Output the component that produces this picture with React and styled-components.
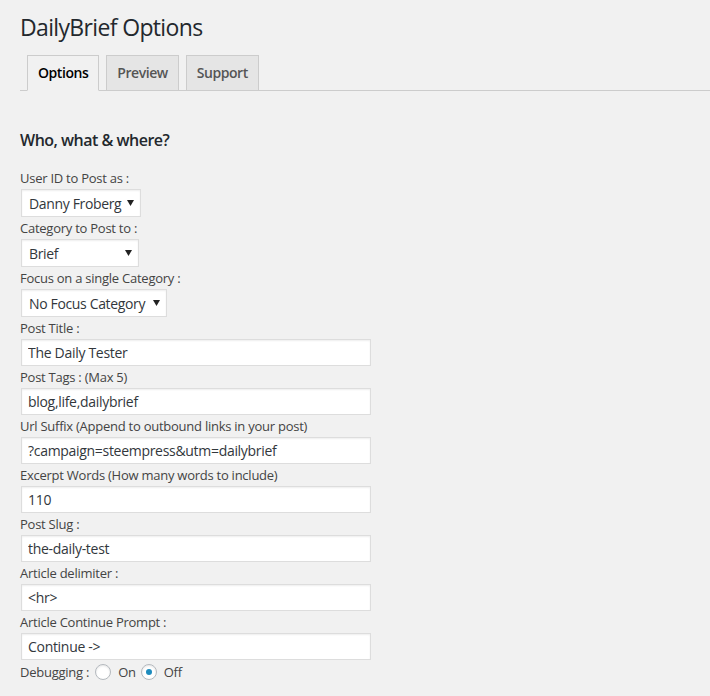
import styled, { createGlobalStyle } from 'styled-components'

const GlobalStyle = createGlobalStyle`
  html, body {
    margin: 0;
    background: #f1f1f1;
  }
  body {
    font-family: "Open Sans", "Noto Sans", sans-serif;
    font-size: 13px;
    letter-spacing: -0.25px;
    color: #444;
  }
`

const Wrap = styled.div`
  padding: 4px 0 0 20px;
`

const Title = styled.h1`
  margin: 0;
  padding: 9px 0 4px;
  font-size: 23px;
  font-weight: 400;
  line-height: 29px;
  letter-spacing: -0.65px;
  color: #23282d;
`

const TabBar = styled.div`
  display: flex;
  align-items: flex-end;
  padding-top: 9px;
  border-bottom: 1px solid #ccc;
`

const Tab = styled.a`
  display: block;
  margin: 0 0 -1px 7px;
  padding: 5px 10px;
  border: 1px solid #ccc;
  border-bottom-color: ${(p) => (p.$active ? '#f1f1f1' : '#ccc')};
  background: ${(p) => (p.$active ? '#f1f1f1' : '#e5e5e5')};
  color: ${(p) => (p.$active ? '#000' : '#555')};
  font-size: 14px;
  font-weight: 600;
  line-height: 24px;
  letter-spacing: -0.45px;
  text-decoration: none;
`

const SectionTitle = styled.h2`
  margin: 38px 0 17px;
  font-size: 16px;
  font-weight: 600;
  line-height: 22px;
  letter-spacing: -0.5px;
  color: #23282d;
`

const Form = styled.form`
  display: flex;
  flex-direction: column;
  align-items: flex-start;
`

const Label = styled.label`
  display: block;
  line-height: 20px;
  color: #444;
`

const SelectWrap = styled.div`
  position: relative;
  margin: 1px;
  width: ${(p) => p.$width}px;
`

const Select = styled.select`
  appearance: none;
  box-sizing: border-box;
  display: block;
  width: 100%;
  height: 28px;
  padding: 0 14px 0 7px;
  border: 1px solid #ddd;
  box-shadow: inset 0 1px 2px rgba(0, 0, 0, 0.07);
  background: #fff;
  color: #32373c;
  font-family: inherit;
  font-size: 14px;
  letter-spacing: -0.35px;
  border-radius: 0;
`

const Arrow = styled.svg`
  position: absolute;
  right: 7px;
  top: 11px;
  pointer-events: none;
`

const TextInput = styled.input`
  box-sizing: border-box;
  display: block;
  width: 350px;
  height: 27px;
  margin: 1px;
  padding: 0 6px;
  border: 1px solid #ddd;
  box-shadow: inset 0 1px 2px rgba(0, 0, 0, 0.07);
  background: #fff;
  color: #32373c;
  font-family: inherit;
  font-size: 14px;
  letter-spacing: -0.3px;
`

const RadioRow = styled.div`
  display: flex;
  align-items: center;
  height: 22px;
`

const RadioLabel = styled.label`
  display: flex;
  align-items: center;
  gap: 7px;
  margin-left: ${(p) => p.$gap}px;
`

const Radio = styled.span`
  box-sizing: border-box;
  display: flex;
  align-items: center;
  justify-content: center;
  width: 16px;
  height: 16px;
  border: 1px solid #b4b9be;
  border-radius: 50%;
  background: #fff;
  box-shadow: inset 0 1px 2px rgba(0, 0, 0, 0.1);
  &::after {
    content: '';
    display: ${(p) => (p.$checked ? 'block' : 'none')};
    width: 6px;
    height: 6px;
    border-radius: 50%;
    background: #1e8cbe;
  }
`

const DropSelect = ({ width, value }) => (
  <SelectWrap $width={width}>
    <Select defaultValue={value}>
      <option>{value}</option>
    </Select>
    <Arrow width="7" height="6" viewBox="0 0 7 6">
      <polygon points="0,0 7,0 3.5,6" fill="#222" />
    </Arrow>
  </SelectWrap>
)

const textFields = [
  ['Post Title :', 'The Daily Tester'],
  ['Post Tags : (Max 5)', 'blog,life,dailybrief'],
  ['Url Suffix (Append to outbound links in your post)', '?campaign=steempress&utm=dailybrief'],
  ['Excerpt Words (How many words to include)', '110'],
  ['Post Slug :', 'the-daily-test'],
  ['Article delimiter :', '<hr>'],
  ['Article Continue Prompt :', 'Continue ->'],
]

export default function App() {
  return (
    <>
      <GlobalStyle />
      <Wrap>
        <Title>DailyBrief Options</Title>
        <TabBar>
          <Tab $active>Options</Tab>
          <Tab>Preview</Tab>
          <Tab>Support</Tab>
        </TabBar>
        <SectionTitle>Who, what &amp; where?</SectionTitle>
        <Form>
          <Label>User ID to Post as :</Label>
          <DropSelect width={120} value="Danny Froberg" />
          <Label>Category to Post to :</Label>
          <DropSelect width={118} value="Brief" />
          <Label>Focus on a single Category :</Label>
          <DropSelect width={146} value="No Focus Category" />
          {textFields.map(([label, value]) => (
            <div key={label}>
              <Label>{label}</Label>
              <TextInput defaultValue={value} />
            </div>
          ))}
          <RadioRow>
            <Label as="span">Debugging :</Label>
            <RadioLabel $gap={6}>
              <Radio />
              On
            </RadioLabel>
            <RadioLabel $gap={5}>
              <Radio $checked />
              Off
            </RadioLabel>
          </RadioRow>
        </Form>
      </Wrap>
    </>
  )
}
